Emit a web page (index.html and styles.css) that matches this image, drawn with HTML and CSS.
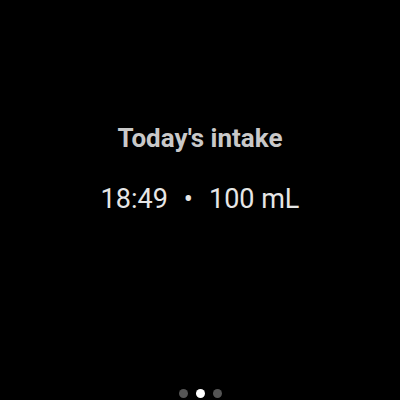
FILE: index.html
```html
<!DOCTYPE html>
<html>
<head>
<meta charset="utf-8">
<link rel="stylesheet" href="styles.css">
</head>
<body>
<div class="screen">
  <div class="content">
    <div class="title">Today's intake</div>
    <div class="entry"><span>18:49</span><span class="sep">•</span><span>100 mL</span></div>
  </div>
  <div class="dots">
    <span class="dot"></span>
    <span class="dot active"></span>
    <span class="dot"></span>
  </div>
</div>
</body>
</html>
```
FILE: styles.css
```css
html, body {
  margin: 0;
  padding: 0;
  background: #000;
}
.screen {
  width: 400px;
  height: 400px;
  display: flex;
  flex-direction: column;
  align-items: center;
  font-family: Roboto, "Liberation Sans", sans-serif;
}
.content {
  padding-top: 122px;
  display: flex;
  flex-direction: column;
  align-items: center;
  gap: 29px;
  flex: 1;
}
.title {
  font-size: 26px;
  font-weight: 700;
  color: #c9c9c9;
  line-height: 32px;
}
.entry {
  display: flex;
  font-size: 27px;
  color: #e6e6e6;
  line-height: 32px;
}
.sep {
  margin: 0 16px;
}
.dots {
  display: flex;
  gap: 8px;
  padding-bottom: 2px;
}
.dot {
  width: 9px;
  height: 9px;
  border-radius: 50%;
  background: #555;
}
.dot.active {
  background: #fff;
}
```
